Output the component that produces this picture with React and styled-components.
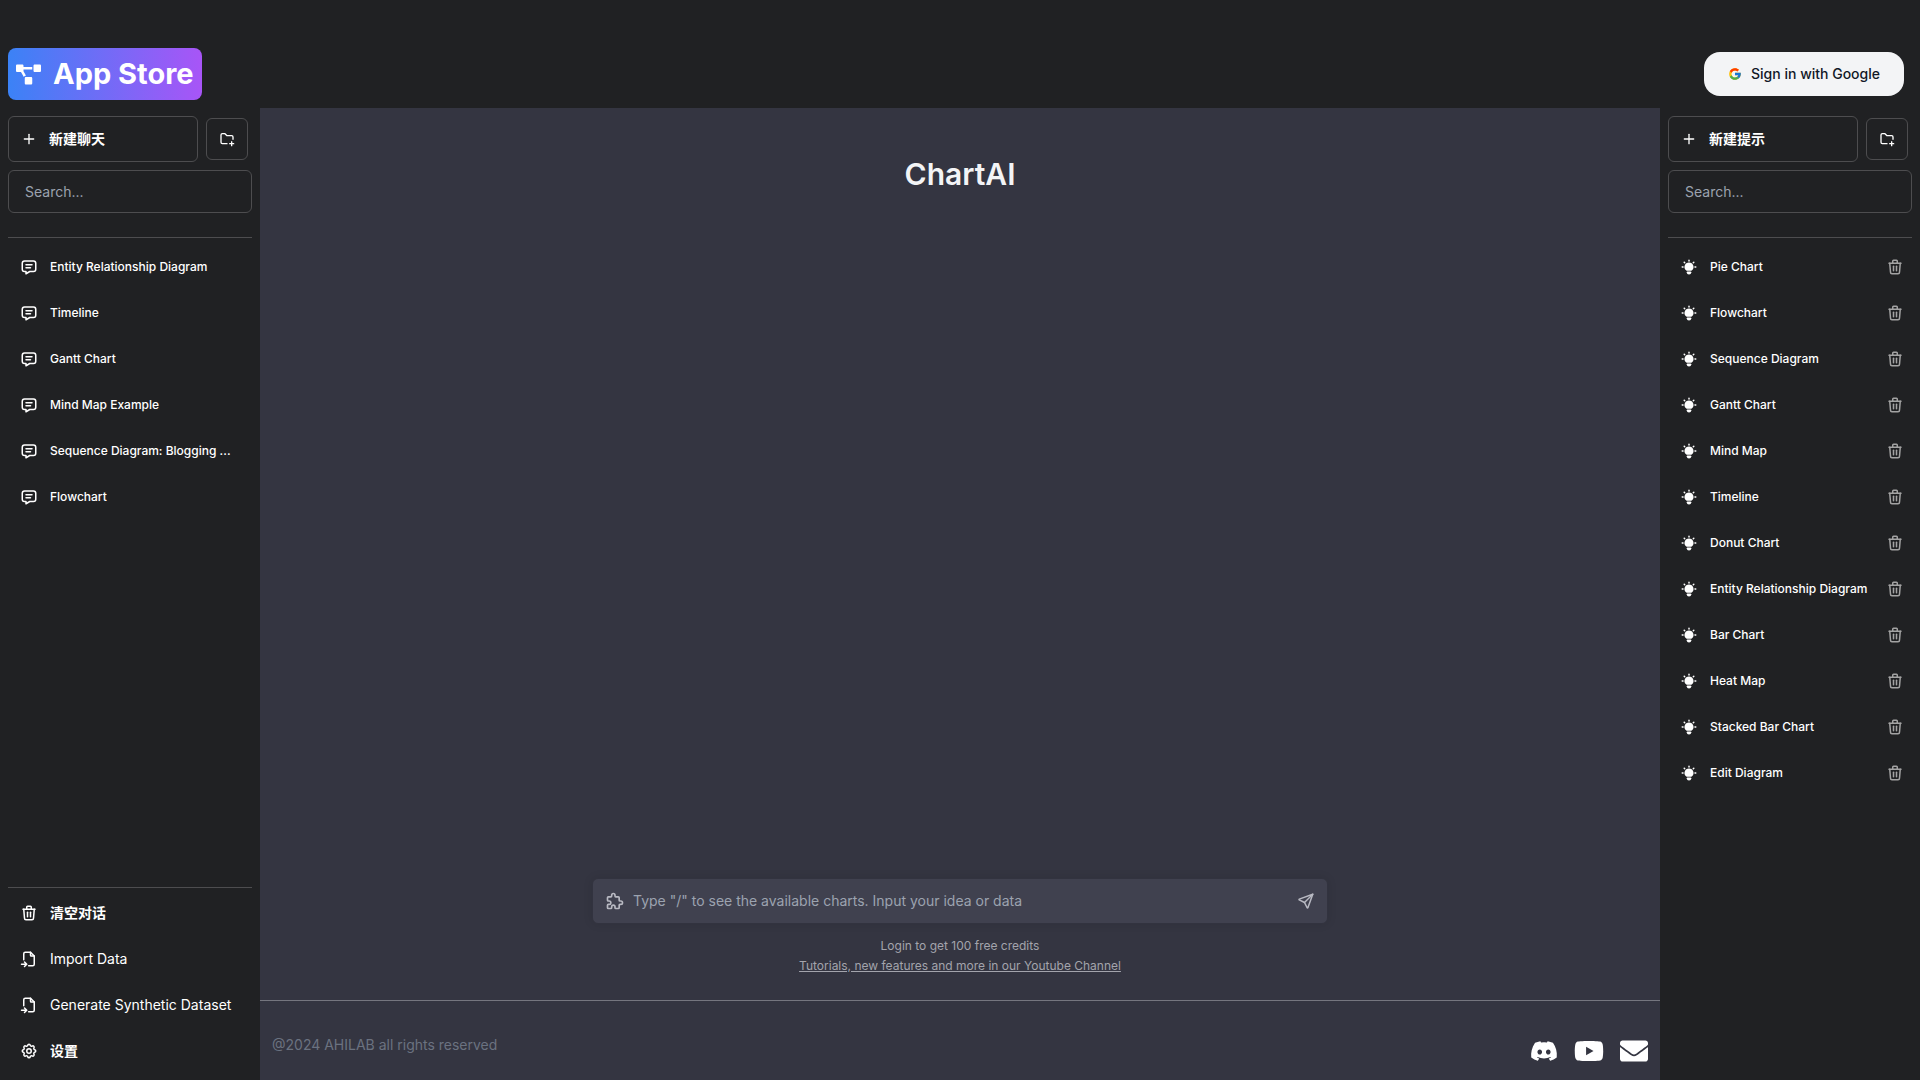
import React from 'react';
import styled, { createGlobalStyle } from 'styled-components';
import {
  TbBulbFilled,
  TbFileImport,
  TbFolderPlus,
  TbMessage,
  TbPlus,
  TbPuzzle,
  TbSend,
  TbSettings,
  TbTrash,
} from 'react-icons/tb';
import { FaDiscord, FaEnvelope, FaProjectDiagram, FaYoutube } from 'react-icons/fa';
import { FcGoogle } from 'react-icons/fc';

const GlobalStyle = createGlobalStyle`
  *, *::before, *::after {
    box-sizing: border-box;
  }

  body {
    margin: 0;
    background: #202123;
    color: #fff;
    font-family: Inter, "Noto Sans CJK SC", sans-serif;
    font-size: 14px;
    line-height: 20px;
  }

  button, input {
    font: inherit;
    color: inherit;
  }

  button {
    cursor: pointer;
  }

  svg {
    display: block;
    flex-shrink: 0;
  }
`;

const Page = styled.div`
  display: flex;
  flex-direction: column;
  min-height: 100vh;
`;

const Header = styled.header`
  display: flex;
  align-items: center;
  justify-content: space-between;
  padding: 48px 16px 8px 8px;
`;

const Brand = styled.a`
  display: flex;
  align-items: center;
  gap: 12px;
  height: 52px;
  padding: 0 8px;
  border-radius: 8px;
  background: linear-gradient(to right, #3b82f6, #a855f7);
  color: #fff;
  font-size: 29px;
  font-weight: 700;
  line-height: 36px;
  text-decoration: none;
`;

const SignInButton = styled.button`
  display: flex;
  align-items: center;
  gap: 9px;
  height: 44px;
  padding: 0 24px;
  border: 0;
  border-radius: 16px;
  background: #f3f4f6;
  color: #111827;
  font-weight: 500;
`;

const Body = styled.div`
  display: flex;
  flex: 1;
`;

const Sidebar = styled.aside`
  display: flex;
  flex-direction: column;
  gap: 8px;
  flex: 0 0 260px;
  padding: 8px;
`;

const Toolbar = styled.div`
  display: flex;
  align-items: center;
  gap: 8px;
`;

const NewButton = styled.button`
  display: flex;
  align-items: center;
  gap: 12px;
  width: 190px;
  height: 46px;
  padding: 0 12px;
  border: 1px solid #4d4d4f;
  border-radius: 6px;
  background: transparent;
  font-weight: 700;
`;

const FolderButton = styled.button`
  display: grid;
  place-items: center;
  width: 42px;
  height: 42px;
  padding: 0;
  border: 1px solid #4d4d4f;
  border-radius: 6px;
  background: transparent;
`;

const SearchInput = styled.input`
  width: 100%;
  height: 43px;
  padding: 0 16px;
  border: 1px solid #4d4d4f;
  border-radius: 6px;
  background: transparent;

  &::placeholder {
    color: #9ca3af;
    opacity: 1;
  }
`;

const List = styled.ul`
  display: flex;
  flex-direction: column;
  flex: 1;
  gap: 4px;
  margin: 16px 0 0;
  padding: 8px 0 0;
  border-top: 1px solid #4d4d4f;
  list-style: none;
`;

const ListItem = styled.li`
  display: flex;
  align-items: center;
`;

const ItemButton = styled.button`
  display: flex;
  align-items: center;
  flex: 1;
  gap: 12px;
  min-width: 0;
  height: 42px;
  padding: 0 0 0 12px;
  border: 0;
  background: transparent;
  font-size: 12px;
  font-weight: 500;
  white-space: nowrap;
`;

const SettingButton = styled(ItemButton)`
  flex: none;
  font-size: 14px;
  font-weight: ${(props) => (props.$bold ? 700 : 400)};
`;

const DeleteButton = styled.button`
  padding: 0 8px;
  border: 0;
  background: transparent;
  color: #a3a3a3;
`;

const Settings = styled.div`
  display: flex;
  flex-direction: column;
  gap: 4px;
  padding-top: 4px;
  border-top: 1px solid #4d4d4f;
`;

const Main = styled.main`
  display: flex;
  flex-direction: column;
  flex: 1;
  min-width: 0;
  background: #343541;
`;

const Title = styled.h1`
  flex: 1;
  margin: 0;
  padding-top: 48px;
  color: #f3f4f6;
  font-size: 30px;
  font-weight: 600;
  line-height: 36px;
  text-align: center;
`;

const Composer = styled.form`
  display: flex;
  align-items: center;
  gap: 8px;
  width: 736px;
  max-width: 100%;
  height: 46px;
  margin: 0 auto;
  padding: 0 12px;
  border: 1px solid #32333f;
  border-radius: 6px;
  background: #40414f;
  box-shadow: 0 0 10px rgba(0, 0, 0, 0.1);
  color: #b8b9c2;
`;

const PromptInput = styled.input`
  flex: 1;
  min-width: 0;
  padding: 0;
  border: 0;
  outline: 0;
  background: transparent;

  &::placeholder {
    color: #9ca3af;
    opacity: 1;
  }
`;

const IconButton = styled.button`
  padding: 0;
  border: 0;
  background: transparent;
`;

const Notes = styled.div`
  display: flex;
  flex-direction: column;
  align-items: center;
  padding: 12px 0 24px;
  color: #a3a4ac;
  font-size: 12px;

  a {
    color: inherit;
  }
`;

const Footer = styled.footer`
  display: flex;
  align-items: center;
  justify-content: space-between;
  height: 80px;
  padding: 8px 12px 0;
  border-top: 1px solid #75767f;
  color: #6b7280;
`;

const Socials = styled.nav`
  display: flex;
  align-items: center;
  gap: 16px;
  padding-top: 12px;

  a {
    color: #fff;
  }
`;

const chats = [
  'Entity Relationship Diagram',
  'Timeline',
  'Gantt Chart',
  'Mind Map Example',
  'Sequence Diagram: Blogging ...',
  'Flowchart',
];

const prompts = [
  'Pie Chart',
  'Flowchart',
  'Sequence Diagram',
  'Gantt Chart',
  'Mind Map',
  'Timeline',
  'Donut Chart',
  'Entity Relationship Diagram',
  'Bar Chart',
  'Heat Map',
  'Stacked Bar Chart',
  'Edit Diagram',
];

const settings = [
  { label: '清空对话', Icon: TbTrash, bold: true },
  { label: 'Import Data', Icon: TbFileImport },
  { label: 'Generate Synthetic Dataset', Icon: TbFileImport },
  { label: '设置', Icon: TbSettings, bold: true },
];

const socials = [
  { label: 'Discord', Icon: FaDiscord, size: 28 },
  { label: 'YouTube', Icon: FaYoutube, size: 30 },
  { label: 'Email', Icon: FaEnvelope, size: 28 },
];

const SidebarTop = ({ label, name }) => (
  <>
    <Toolbar>
      <NewButton type="button">
        <TbPlus size={16} />
        {label}
      </NewButton>
      <FolderButton type="button" aria-label="New folder">
        <TbFolderPlus size={16} />
      </FolderButton>
    </Toolbar>
    <SearchInput type="text" aria-label={name} placeholder="Search..." />
  </>
);

const App = () => {
  return (
    <Page>
      <GlobalStyle />
      <Header>
        <Brand href="#">
          <FaProjectDiagram size={25} />
          App Store
        </Brand>
        <SignInButton type="button">
          <FcGoogle size={14} />
          Sign in with Google
        </SignInButton>
      </Header>
      <Body>
        <Sidebar>
          <SidebarTop label="新建聊天" name="Search chats" />
          <List>
            {chats.map((chat) => (
              <ListItem key={chat}>
                <ItemButton type="button">
                  <TbMessage size={18} />
                  {chat}
                </ItemButton>
              </ListItem>
            ))}
          </List>
          <Settings>
            {settings.map(({ label, Icon, bold }) => (
              <SettingButton type="button" key={label} $bold={bold}>
                <Icon size={18} />
                {label}
              </SettingButton>
            ))}
          </Settings>
        </Sidebar>
        <Main>
          <Title>ChartAI</Title>
          <Composer>
            <IconButton type="button" aria-label="Plugins">
              <TbPuzzle size={20} />
            </IconButton>
            <PromptInput
              type="text"
              aria-label="Message"
              placeholder={'Type "/" to see the available charts. Input your idea or data'}
            />
            <IconButton type="submit" aria-label="Send">
              <TbSend size={18} />
            </IconButton>
          </Composer>
          <Notes>
            <span>Login to get 100 free credits</span>
            <a href="#">Tutorials, new features and more in our Youtube Channel</a>
          </Notes>
          <Footer>
            <span>@2024 AHILAB all rights reserved</span>
            <Socials>
              {socials.map(({ label, Icon, size }) => (
                <a href="#" aria-label={label} key={label}>
                  <Icon size={size} />
                </a>
              ))}
            </Socials>
          </Footer>
        </Main>
        <Sidebar>
          <SidebarTop label="新建提示" name="Search prompts" />
          <List>
            {prompts.map((prompt) => (
              <ListItem key={prompt}>
                <ItemButton type="button">
                  <TbBulbFilled size={18} />
                  {prompt}
                </ItemButton>
                <DeleteButton type="button" aria-label={`Delete ${prompt}`}>
                  <TbTrash size={18} />
                </DeleteButton>
              </ListItem>
            ))}
          </List>
        </Sidebar>
      </Body>
    </Page>
  );
};

export default App;
